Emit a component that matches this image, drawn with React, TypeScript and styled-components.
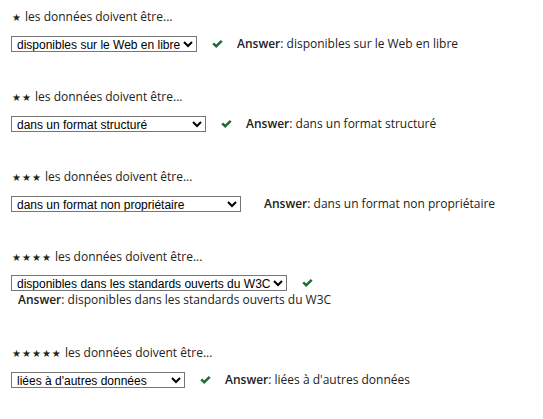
import React from "react";
import styled, { createGlobalStyle } from "styled-components";

const Global = createGlobalStyle`
  html, body { margin: 0; padding: 0; background: #fff; }
  body { font-family: "Open Sans", sans-serif; color: #222; }
`;

const Page = styled.div`
  padding: 8px 11px 0;
  width: 521px;
  box-sizing: border-box;
`;

const Question = styled.div`
  margin-bottom: 35px;
`;

const Label = styled.p`
  margin: 0 0 8px;
  font-size: 12px;
  line-height: 18px;
`;

const Stars = styled.span`
  font-family: "DejaVu Sans", sans-serif;
  font-size: 10px;
  letter-spacing: 1px;
  margin-left: 1px;
`;

const Row = styled.div`
  display: flex;
  flex-wrap: wrap;
  align-items: center;
  row-gap: 0;
`;

const Select = styled.select<{ $w: number }>`
  width: ${(p) => p.$w}px;
  height: 16px;
  font-family: "Liberation Sans", Arial, sans-serif;
  font-size: 12px;
  line-height: 14px;
  color: #000;
  border: 1px solid #767676;
  border-radius: 0;
  padding: 0 0 0 1px;
  background: #fff;
  box-sizing: border-box;
`;

const Check = styled.svg`
  width: 11px;
  height: 10px;
  margin: 0 7px 0 15px;
  flex: none;
`;

const Spacer = styled.span`
  width: 16px;
  flex: none;
`;

const Answer = styled.span`
  margin-left: 7px;
  font-size: 12px;
  line-height: 18px;
  color: #222;
  b { font-weight: 600; }
`;

type Q = { stars: number; value: string; width: number; correct: boolean };

const questions: Q[] = [
  { stars: 1, value: "disponibles sur le Web en libre", width: 186, correct: true },
  { stars: 2, value: "dans un format structuré", width: 195, correct: true },
  { stars: 3, value: "dans un format non propriétaire", width: 230, correct: false },
  { stars: 4, value: "disponibles dans les standards ouverts du W3C", width: 276, correct: true },
  { stars: 5, value: "liées à d'autres données", width: 174, correct: true },
];

function CheckIcon() {
  return (
    <Check viewBox="0 0 11 10">
      <path d="M0.3 5.2 L2.1 3.4 L4.2 5.5 L8.8 0.9 L10.6 2.7 L4.2 9.1 Z" fill="#1f6b3c" />
    </Check>
  );
}

export default function App() {
  return (
    <>
      <Global />
      <Page>
        {questions.map((q) => (
          <Question key={q.stars}>
            <Label>
              <Stars>{"★".repeat(q.stars)}</Stars> les données doivent être...
            </Label>
            <Row>
              <Select $w={q.width} defaultValue={q.value}>
                <option value={q.value}>{q.value}</option>
              </Select>
              {q.correct ? <CheckIcon /> : <Spacer />}
              <Answer>
                <b>Answer</b>: {q.value}
              </Answer>
            </Row>
          </Question>
        ))}
      </Page>
    </>
  );
}
